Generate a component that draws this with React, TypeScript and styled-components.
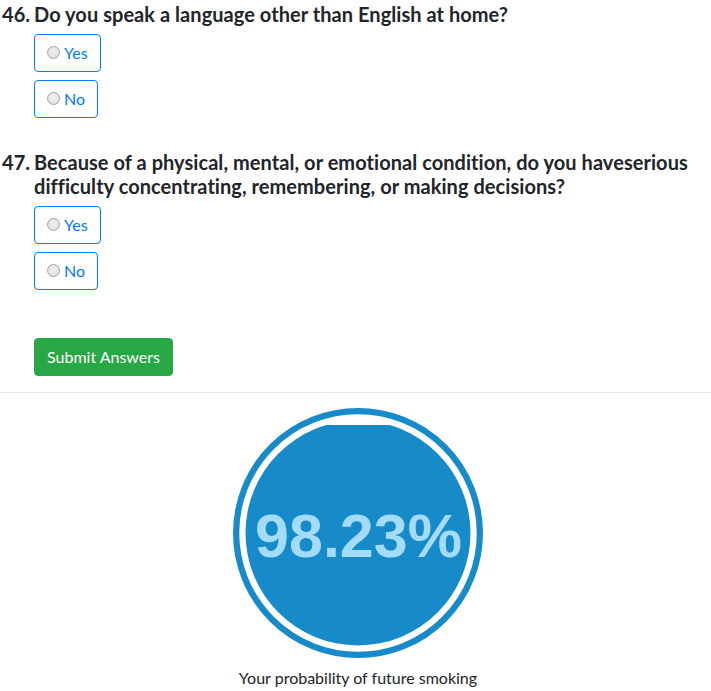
import React from "react";
import styled, { createGlobalStyle } from "styled-components";

const GlobalStyle = createGlobalStyle`
  html, body { margin: 0; padding: 0; background: #fff; }
  body {
    font-family: Lato, "Open Sans", sans-serif;
    color: #212529;
    font-size: 16px;
    line-height: 1.5;
  }
`;

const Page = styled.div`
  padding-top: 2px;
  width: 711px;
  overflow: hidden;
`;

const Question = styled.section<{ $gap: number }>`
  margin-top: ${(p) => p.$gap}px;
`;

const Heading = styled.h5`
  display: flex;
  margin: 0;
  padding-left: 2px;
  font-size: 20px;
  line-height: 24px;
  font-weight: 700;
  letter-spacing: 0.05px;
  color: #212529;
`;

const Number = styled.span`
  flex: 0 0 32px;
`;

const HeadingText = styled.span`
  flex: 1 1 auto;
  min-width: 0;
`;

const Options = styled.div`
  display: flex;
  flex-direction: column;
  align-items: flex-start;
  gap: 8px;
  margin: 8px 0 0 34px;
`;

const OptionLabel = styled.label`
  display: inline-flex;
  align-items: center;
  padding: 6px 12px;
  border: 1px solid #007bff;
  border-radius: 4px;
  color: #007bff;
  font-size: 16px;
  line-height: 24px;
  cursor: pointer;
`;

const Radio = styled.span`
  box-sizing: border-box;
  width: 13px;
  height: 13px;
  border-radius: 50%;
  border: 1px solid #a3a3a3;
  background: radial-gradient(circle at 50% 40%, #f0f0f0 0%, #dcdcdc 100%);
  margin-right: 4px;
  margin-top: -2px;
`;

const SubmitButton = styled.button`
  margin: 48px 0 0 34px;
  padding: 6px 12px;
  border: 1px solid #28a745;
  border-radius: 4px;
  background: #28a745;
  color: #fff;
  font-family: inherit;
  font-size: 16px;
  line-height: 24px;
`;

const Rule = styled.hr`
  margin: 16px 0 0;
  border: 0;
  border-top: 1px solid rgba(0, 0, 0, 0.1);
  width: 711px;
`;

const Result = styled.div`
  display: flex;
  flex-direction: column;
  align-items: center;
  padding-left: 5px;
  margin-top: 15px;
`;

const Caption = styled.p`
  margin: 8px 0 0;
  font-size: 16px;
  line-height: 24px;
  color: #212529;
`;

const Option = ({ label }: { label: string }) => (
  <OptionLabel>
    <Radio />
    {label}
  </OptionLabel>
);

const QuestionTitle = ({ num, text }: { num: number; text: string }) => (
  <Heading>
    <Number>{num}.</Number>
    <HeadingText>{text}</HeadingText>
  </Heading>
);

const Gauge = ({ value }: { value: number }) => {
  const size = 250;
  const r = size / 2;
  const thick = r * 0.05;
  const fillR = r - thick - r * 0.05;
  return (
    <svg width={size} height={size} viewBox={`0 0 ${size} ${size}`}>
      <defs>
        <clipPath id="waveClip">
          <rect x="0" y="17" width={size} height={size - 17} />
        </clipPath>
      </defs>
      <circle cx={r} cy={r} r={r - thick / 2} fill="none" stroke="#178BCA" strokeWidth={thick} />
      <circle cx={r} cy={r} r={fillR} fill="#178BCA" clipPath="url(#waveClip)" />
      <text
        x={r + 0.5}
        y={149}
        textAnchor="middle"
        fill="#A4DBF8"
        fontFamily='"Liberation Sans", Arial, sans-serif'
        fontWeight={700}
        fontSize={61}
      >
        {value.toFixed(2)}%
      </text>
    </svg>
  );
};

export default function App() {
  return (
    <>
      <GlobalStyle />
      <Page>
        <Question $gap={0}>
          <QuestionTitle num={46} text="Do you speak a language other than English at home?" />
          <Options>
            <Option label="Yes" />
            <Option label="No" />
          </Options>
        </Question>
        <Question $gap={32}>
          <QuestionTitle
            num={47}
            text="Because of a physical, mental, or emotional condition, do you haveserious difficulty concentrating, remembering, or making decisions?"
          />
          <Options>
            <Option label="Yes" />
            <Option label="No" />
          </Options>
        </Question>
        <SubmitButton>Submit Answers</SubmitButton>
        <Rule />
        <Result>
          <Gauge value={98.23} />
          <Caption>Your probability of future smoking</Caption>
        </Result>
      </Page>
    </>
  );
}
